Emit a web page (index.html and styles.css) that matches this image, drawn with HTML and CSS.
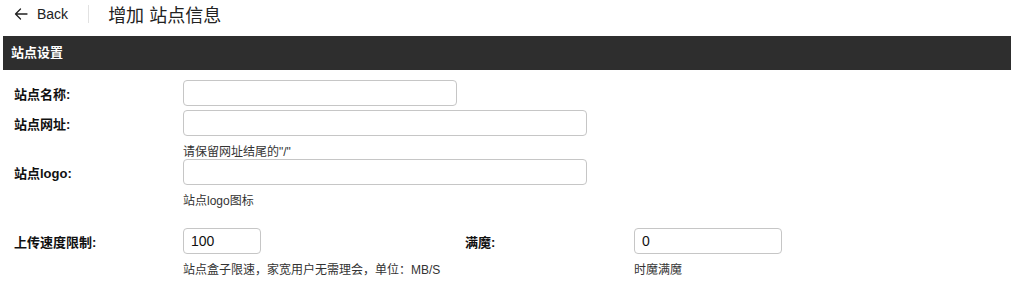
FILE: index.html
```html
<!DOCTYPE html>
<html lang="zh-CN">
<head>
<meta charset="utf-8">
<title>增加 站点信息</title>
<link rel="stylesheet" href="styles.css">
</head>
<body>
<header class="page-header">
  <a class="back" href="#">
    <svg class="back-icon" width="14" height="12" viewBox="0 0 14 12" aria-hidden="true">
      <path d="M13 6H1.5M6.5 1L1.5 6l5 5" fill="none" stroke="#222" stroke-width="1.3" stroke-linecap="round" stroke-linejoin="round"/>
    </svg>
    <span>Back</span>
  </a>
  <span class="divider"></span>
  <h1 class="title">增加 站点信息</h1>
</header>

<div class="section-bar">站点设置</div>

<form class="form">
  <div class="row">
    <label class="label">站点名称:</label>
    <div class="field"><input class="input w-name" type="text"></div>
  </div>
  <div class="row hinted">
    <label class="label">站点网址:</label>
    <div class="field">
      <input class="input w-wide" type="text">
      <div class="hint">请保留网址结尾的"/"</div>
    </div>
  </div>
  <div class="row hinted">
    <label class="label">站点logo:</label>
    <div class="field">
      <input class="input w-wide" type="text">
      <div class="hint">站点logo图标</div>
    </div>
  </div>
  <div class="row hinted spaced">
    <label class="label">上传速度限制:</label>
    <div class="field">
      <input class="input w-small" type="text" value="100">
      <div class="hint">站点盒子限速，家宽用户无需理会，单位：MB/S</div>
    </div>
    <label class="label">满魔:</label>
    <div class="field">
      <input class="input w-mid" type="text" value="0">
      <div class="hint">时魔满魔</div>
    </div>
  </div>
</form>
</body>
</html>
```

FILE: styles.css
```css
* { box-sizing: border-box; }

body {
  margin: 0;
  background: #fff;
  color: #111;
  font-family: "Liberation Sans", "Noto Sans CJK SC", sans-serif;
}

.page-header {
  display: flex;
  align-items: center;
  height: 28px;
  padding-left: 14px;
}

.back {
  display: flex;
  align-items: center;
  color: #222;
  text-decoration: none;
  font-size: 14px;
}

.back-icon { margin-right: 9px; }

.divider {
  width: 1px;
  height: 18px;
  background: #e2e2e2;
  margin: 0 19px 0 20px;
}

.title {
  margin: 0;
  font-size: 18px;
  font-weight: normal;
  color: #222;
}

.section-bar {
  margin: 8px 9px 0 3px;
  height: 34px;
  line-height: 34px;
  padding-left: 8px;
  background: #2e2e2e;
  color: #fff;
  font-size: 13px;
  font-weight: bold;
}

.form {
  padding: 10px 0 0 14px;
  display: flex;
  flex-direction: column;
}

.row {
  display: grid;
  grid-template-columns: 169px 282px 169px 1fr;
  align-items: start;
  margin-bottom: 4px;
}

.row.hinted { margin-bottom: 0; }
.row.spaced { margin-top: 20px; }

.label {
  height: 26px;
  padding-top: 2px;
  line-height: 26px;
  font-size: 13px;
  font-weight: bold;
  color: #111;
}

.field {
  display: flex;
  flex-direction: column;
  align-items: flex-start;
}

.input {
  height: 26px;
  border: 1px solid #c6c6c6;
  border-radius: 4px;
  padding: 0 7px;
  font-family: "Liberation Sans", "Noto Sans CJK SC", sans-serif;
  font-size: 14px;
  color: #111;
  background: #fff;
  outline: none;
}

.w-name { width: 274px; }
.w-wide { width: 404px; }
.w-small { width: 78px; }
.w-mid { width: 148px; }

.hint {
  margin-top: 10px;
  line-height: 13px;
  font-size: 12px;
  color: #333;
  white-space: nowrap;
}
```
